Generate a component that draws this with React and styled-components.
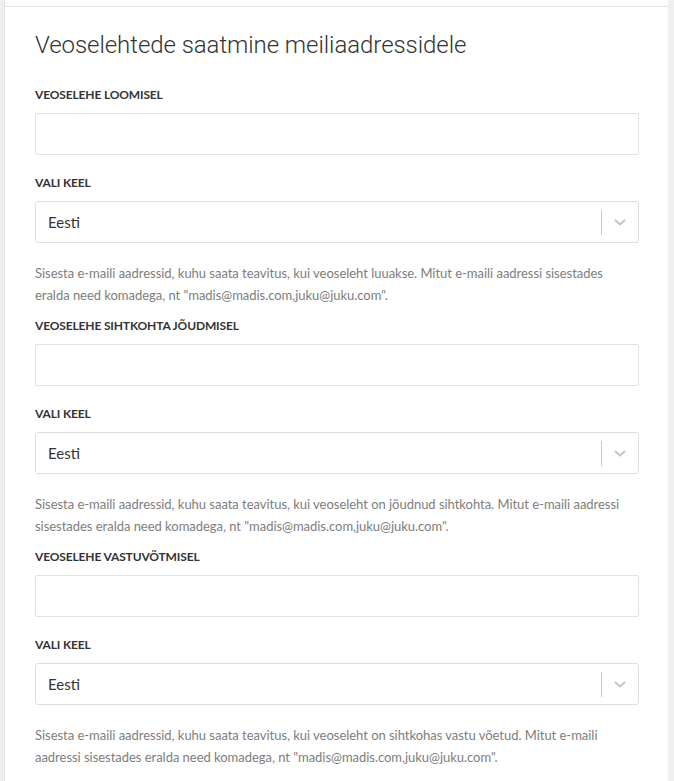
import styled, { createGlobalStyle } from "styled-components";

const Global = createGlobalStyle`
  html, body {
    margin: 0;
    padding: 0;
    background: #efefef;
  }
`;

const Page = styled.div`
  padding: 0 6px 0 4px;
  min-height: 781px;
  box-sizing: border-box;
`;

const Above = styled.div`
  height: 6px;
  background: #fff;
  border-left: 1px solid #e2e2e2;
`;

const Card = styled.section`
  background: #fff;
  border-top: 1px solid #dfe5e5;
  border-left: 1px solid #e2e2e2;
  padding: 0 29px 30px 30px;
  min-height: 774px;
  box-sizing: border-box;
`;

const Title = styled.h2`
  margin: 0;
  padding-top: 24px;
  font-family: Roboto, "Noto Sans", sans-serif;
  font-weight: 300;
  font-size: 24px;
  line-height: 28px;
  color: #333;
  letter-spacing: -0.06px;
`;

const Group = styled.div`
  margin-top: ${(p) => (p.$first ? "28px" : "12px")};
`;

const Label = styled.div`
  font-family: Lato, "Open Sans", sans-serif;
  font-weight: 700;
  font-size: 12px;
  line-height: 16px;
  text-transform: uppercase;
  color: #333;
  letter-spacing: -0.15px;
  margin-bottom: 10px;
`;

const Input = styled.input`
  display: block;
  width: 100%;
  height: 42px;
  box-sizing: border-box;
  border: 1px solid #dde2e2;
  border-radius: 2px;
  background: #fff;
  outline: none;
  font-family: Lato, sans-serif;
  font-size: 15px;
  margin-bottom: 20px;
`;

const Select = styled.div`
  display: flex;
  align-items: center;
  height: 42px;
  box-sizing: border-box;
  border: 1px solid #dedede;
  border-radius: 3px;
  background: #fff;
`;

const Value = styled.div`
  flex: 1;
  padding-left: 12px;
  font-family: Lato, "Open Sans", sans-serif;
  font-size: 15px;
  color: #333;
`;

const Divider = styled.span`
  width: 1px;
  height: 25px;
  background: #cccccc;
`;

const Arrow = styled.div`
  width: 36px;
  display: flex;
  justify-content: center;
  align-items: center;
`;

const Help = styled.p`
  margin: 19px 0 0;
  padding-right: 8px;
  font-family: Lato, "Open Sans", sans-serif;
  font-size: 13px;
  line-height: 22px;
  color: #7d7d7d;
  letter-spacing: -0.03px;
`;

const Chevron = () => (
  <svg width="12" height="7" viewBox="0 0 12 7">
    <path d="M1 1l5 4.5L11 1" fill="none" stroke="#c4c4c4" strokeWidth="2" />
  </svg>
);

const groups = [
  {
    label: "Veoselehe loomisel",
    help: 'Sisesta e-maili aadressid, kuhu saata teavitus, kui veoseleht luuakse. Mitut e-maili aadressi sisestades eralda need komadega, nt "madis@madis.com,juku@juku.com".',
  },
  {
    label: "Veoselehe sihtkohta jõudmisel",
    help: 'Sisesta e-maili aadressid, kuhu saata teavitus, kui veoseleht on jõudnud sihtkohta. Mitut e-maili aadressi sisestades eralda need komadega, nt "madis@madis.com,juku@juku.com".',
  },
  {
    label: "Veoselehe vastuvõtmisel",
    help: 'Sisesta e-maili aadressid, kuhu saata teavitus, kui veoseleht on sihtkohas vastu võetud. Mitut e-maili aadressi sisestades eralda need komadega, nt "madis@madis.com,juku@juku.com".',
  },
];

export default function App() {
  return (
    <>
      <Global />
      <Page>
        <Above />
        <Card>
          <Title>Veoselehtede saatmine meiliaadressidele</Title>
          {groups.map((g, i) => (
            <Group key={g.label} $first={i === 0}>
              <Label>{g.label}</Label>
              <Input type="text" />
              <Label>Vali keel</Label>
              <Select>
                <Value>Eesti</Value>
                <Divider />
                <Arrow>
                  <Chevron />
                </Arrow>
              </Select>
              <Help>{g.help}</Help>
            </Group>
          ))}
        </Card>
      </Page>
    </>
  );
}
